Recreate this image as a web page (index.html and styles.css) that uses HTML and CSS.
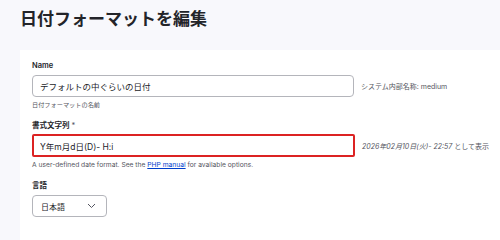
FILE: index.html
```html
<!DOCTYPE html>
<html lang="ja">
<head>
    <meta charset="UTF-8">
    <meta name="viewport" content="width=device-width, initial-scale=1.0">
    <title>日付フォーマットを編集</title>
    <link rel="stylesheet" href="styles.css">
</head>
<body>
    <h1 class="page-title">日付フォーマットを編集</h1>
    <form class="card">
        <div class="field">
            <label class="label">Name</label>
            <div class="row">
                <input class="text-input" type="text" value="デフォルトの中ぐらいの日付">
                <span class="suffix">システム内部名称: medium</span>
            </div>
            <div class="desc">日付フォーマットの名前</div>
        </div>
        <div class="field">
            <label class="label">書式文字列 <span class="req">*</span></label>
            <div class="row">
                <input class="text-input error" type="text" value="Y年m月d日(D)- H:i">
                <span class="suffix preview"><em>2026年02月10日(火)- 22:57</em> として表示</span>
            </div>
            <div class="desc en">A user-defined date format. See the <a href="#">PHP manual</a> for available options.</div>
        </div>
        <div class="field">
            <label class="label">言語</label>
            <div class="select">
                <span>日本語</span>
                <svg class="chevron" width="9" height="6" viewBox="0 0 9 6"><path d="M1 1l3.5 3.5L8 1" fill="none" stroke="#545560" stroke-width="1"/></svg>
            </div>
        </div>
    </form>
</body>
</html>
```

FILE: styles.css
```css
body{
    margin: 0;
    background: #f8f8fc;
    color: #232429;
    font-family: Inter, "Noto Sans CJK JP", sans-serif;
}
.page-title{
    margin: 8px 0 22px 20px;
    font-size: 17px;
    line-height: 20px;
    font-weight: 600;
    font-family: "Noto Sans CJK JP", sans-serif;
}
.card{
    margin-left: 20px;
    background: #fff;
    padding: 11px 0 24px 12px;
}
.field{
    margin-bottom: 11px;
}
.field:last-child{
    margin-bottom: 0;
}
.label{
    display: block;
    font-size: 7.5px;
    line-height: 10px;
    font-weight: 600;
    margin-bottom: 4px;
}
.req{
    color: #545560;
    font-weight: 400;
}
.row{
    display: flex;
    align-items: center;
    gap: 7px;
}
.text-input{
    box-sizing: border-box;
    width: 322px;
    height: 22px;
    border: 1px solid #b4b5bb;
    border-radius: 4px;
    padding: 0 7px;
    font-size: 8.5px;
    font-family: Inter, "Noto Sans CJK JP", sans-serif;
    color: #232429;
}
.text-input.error{
    width: 323px;
    height: 23px;
    border: 2px solid #dc2323;
    border-radius: 2px;
    padding: 0 6px;
    margin-top: -1px;
}
.suffix{
    font-size: 7px;
    color: #545560;
    white-space: nowrap;
}
.preview em{
    font-style: italic;
}
.desc{
    margin-top: 3px;
    font-size: 6.2px;
    line-height: 10px;
    color: #545560;
}
.desc.en{
    font-size: 6.7px;
}
.desc a{
    color: #003ecc;
    text-decoration: underline;
}
.select{
    box-sizing: border-box;
    width: 75px;
    height: 22px;
    border: 1px solid #b4b5bb;
    border-radius: 4px;
    display: flex;
    align-items: center;
    justify-content: space-between;
    padding: 0 10px 0 8px;
    font-size: 8px;
}
```
